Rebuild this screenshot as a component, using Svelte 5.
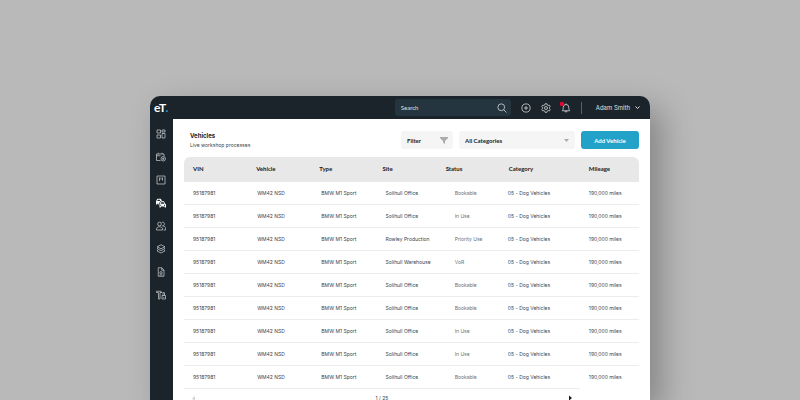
<script>
  const navItems = [
    { id: 'dashboard', label: 'Dashboard' },
    { id: 'bookings', label: 'Bookings' },
    { id: 'board', label: 'Board' },
    { id: 'vehicles', label: 'Vehicles' },
    { id: 'users', label: 'Users' },
    { id: 'stock', label: 'Stock' },
    { id: 'reports', label: 'Reports' },
    { id: 'tools', label: 'Tools' }
  ];

  const columns = [
    { key: 'vin', label: 'VIN' },
    { key: 'vehicle', label: 'Vehicle' },
    { key: 'type', label: 'Type' },
    { key: 'site', label: 'Site' },
    { key: 'status', label: 'Status' },
    { key: 'category', label: 'Category' },
    { key: 'mileage', label: 'Mileage' }
  ];

  const places = [
    ['Solihull Office', 'Bookable'],
    ['Solihull Office', 'In Use'],
    ['Rowley Production', 'Priority Use'],
    ['Solihull Warehouse', 'VoR'],
    ['Solihull Office', 'Bookable'],
    ['Solihull Office', 'Bookable'],
    ['Solihull Office', 'In Use'],
    ['Solihull Office', 'In Use'],
    ['Solihull Office', 'Bookable']
  ];

  const vehicles = places.map(([site, status]) => ({
    vin: '95187981',
    vehicle: 'WM42 NSD',
    type: 'BMW M1 Sport',
    site,
    status,
    category: '05 - Dog Vehicles',
    mileage: '190,000 miles'
  }));

  let active = $state('vehicles');
  let search = $state('');
</script>

<div class="page">
  <div class="window">
    <header class="topbar">
      <a class="logo" href="#home">eT<span>.</span></a>

      <label class="search">
        <input type="text" placeholder="Search" aria-label="Search" bind:value={search} />
        <svg viewBox="0 0 20 20" width="10" height="10">
          <circle cx="8.5" cy="8.5" r="6.8" />
          <path d="M13.5 13.5L19 19" />
        </svg>
      </label>

      <div class="actions">
        <button aria-label="Add">
          <svg viewBox="0 0 20 20" width="10" height="10">
            <circle cx="10" cy="10" r="8.2" />
            <path d="M10 6v8M6 10h8" />
          </svg>
        </button>
        <button aria-label="Settings">
          <svg viewBox="0 0 20 20" width="10" height="10">
            <path d="M8.2 1.5h3.6l.6 2.4 1.9 1.1 2.4-.7 1.8 3.1-1.8 1.7v2l1.8 1.7-1.8 3.1-2.4-.7-1.9 1.1-.6 2.4H8.2l-.6-2.4-1.9-1.1-2.4.7-1.8-3.1 1.8-1.7v-2L1.5 7.4l1.8-3.1 2.4.7 1.9-1.1z" />
            <circle cx="10" cy="10" r="3" />
          </svg>
        </button>
        <button class="bell" aria-label="Notifications">
          <svg viewBox="0 0 20 20" width="10" height="10">
            <path d="M2.5 15.5c1.7-1.5 2-3.5 2-7a5.5 5.5 0 0 1 11 0c0 3.5.3 5.500 2 7zM8 16c0 3 4 3 4 0M10 3V1" />
          </svg>
          <i></i>
        </button>
      </div>

      <button class="user">
        Adam Smith
        <svg viewBox="0 0 10 10" width="5" height="5"><path d="M1 3l4 4 4-4" /></svg>
      </button>
    </header>

    <div class="body">
      <nav class="sidebar">
        {#each navItems as item}
          <a
            href="#{item.id}"
            class:active={active === item.id}
            aria-label={item.label}
            onclick={() => (active = item.id)}
          >
            <svg viewBox="0 0 20 20" width="10" height="10">
              {#if item.id === 'dashboard'}
                <path d="M2 2h7v6H2zM2 12h7v6H2zM12 9h6v9h-6zM12 2h6v4h-6z" />
              {:else if item.id === 'bookings'}
                <path d="M9 17H1V4h15v4M1 7.5h8M4.5 4V1.5M12 4V1.5" />
                <circle cx="14.5" cy="13.5" r="4.5" />
                <path d="M14.5 11v5M12 13.5h5" />
              {:else if item.id === 'board'}
                <path d="M2 2h16v16H2zM7 5v7M10 5v4M13 5v6" />
              {:else if item.id === 'vehicles'}
                <path class="solid" fill-rule="evenodd" d="M0 7l2-4.5L3.500 1.500h6L12 5.500 8.500 6 7 9.500 5.500 11v2H3.500v-1.500H2V13H0zM3.500 3.500L2.500 6h5l1-2.500z" />
                <path class="solid" fill-rule="evenodd" d="M7 12l2-4.500 1.500-1H16l2 4.500 2 2v6h-2.500v-2H9.500v2H7zM10.500 8.500l-1.200 3h7.200l-1.200-3zM8.500 13.500v2h2v-2zM16 13.500v2h2v-2z" />
              {:else if item.id === 'users'}
                <circle cx="7" cy="6" r="3.7" />
                <path d="M1 18v-2c0-6 12-6 12 0v2zM11.5 2.800a3.700 3.700 0 1 1 1.500 6.900c4 0 6 2.500 6 5.300v3h-4" />
              {:else if item.id === 'stock'}
                <path d="M10 1.500l8 4-8 4-8-4zM4 7.500l-2 1.700 8 4 8-4-2-1.700M4 12l-2 1.700 8 4.300 8-4.300-2-1.700" />
              {:else if item.id === 'reports'}
                <path d="M4.500 1.500h7l4.500 5v12H4.500zM11.500 1.500v5H16" />
                <circle cx="10" cy="11.500" r="2.300" />
                <path d="M7 16h6" />
              {:else}
                <path d="M1 2.500h9l2 2.500H8v13H5V5H1zM12 11h7v7h-7zM14 11V6l1.500-2L17 6v5M15.500 14v2" />
              {/if}
            </svg>
          </a>
        {/each}
      </nav>

      <main>
        <div class="toolbar">
          <div class="heading">
            <h1>Vehicles</h1>
            <p>Live workshop processes</p>
          </div>
          <button class="filter">
            Filter
            <svg viewBox="0 0 16 14" width="8" height="7"><path d="M0 0h16v2L10 8v6L6 11V8L0 2z" /></svg>
          </button>
          <div class="select">
            <select aria-label="Category">
              <option>All Categories</option>
            </select>
            <svg viewBox="0 0 10 6" width="5" height="3"><path d="M0 0h10L5 6z" /></svg>
          </div>
          <button class="add">Add Vehicle</button>
        </div>

        <table>
          <thead>
            <tr>
              {#each columns as col}
                <th class={col.key}>{col.label}</th>
              {/each}
            </tr>
          </thead>
          <tbody>
            {#each vehicles as row}
              <tr>
                {#each columns as col}
                  <td class={col.key}>{row[col.key]}</td>
                {/each}
              </tr>
            {/each}
          </tbody>
        </table>

        <div class="pager">
          <button aria-label="Previous page" disabled>
            <svg viewBox="0 0 6 10" width="3" height="5"><path d="M6 0v10L0 5z" /></svg>
          </button>
          <span>1 / 25</span>
          <button aria-label="Next page">
            <svg viewBox="0 0 6 10" width="3" height="6"><path d="M0 0v10l6-5z" /></svg>
          </button>
        </div>
      </main>
    </div>
  </div>
</div>

<style>
  :global(body) {
    background: #b9b9b9;
  }

  .page {
    box-sizing: border-box;
    height: 100vh;
    padding: 96px 150px 0;
    overflow: hidden;
    font-family: Inter, 'Open Sans', sans-serif;
    font-size: 5px;
    color: #3c4347;
    display: flex;
  }

  .window {
    flex: 1;
    min-width: 0;
    display: flex;
    flex-direction: column;
    background: #1a242a;
    border-radius: 10px 10px 0 0;
    box-shadow: 12px 12px 32px rgba(0, 0, 0, 0.28);
  }

  button,
  input,
  select {
    font: inherit;
    color: inherit;
    border: none;
    background: none;
    margin: 0;
    padding: 0;
  }

  button {
    cursor: pointer;
  }

  svg {
    display: block;
    fill: none;
    stroke: currentColor;
    stroke-width: 1.5;
  }

  /* Top bar */
  .topbar {
    display: flex;
    align-items: center;
    height: 23px;
    padding: 0 10px 0 4px;
    color: #dfe3e5;
  }

  .logo {
    flex: 1;
    font-family: Lato, sans-serif;
    font-size: 12px;
    line-height: 16px;
    font-weight: bold;
    color: #ffffff;
    text-decoration: none;
  }

  .logo span {
    color: #22a2c9;
  }

  .search {
    box-sizing: border-box;
    display: flex;
    align-items: center;
    width: 116px;
    height: 17px;
    padding: 0 4px 0 6px;
    border-radius: 3px;
    background: #243540;
    font-family: Lato, sans-serif;
    font-size: 6px;
  }

  .search input {
    flex: 1;
    min-width: 0;
    outline: none;
  }

  .search input::placeholder {
    color: #dfe3e5;
    opacity: 1;
  }

  .actions {
    display: flex;
    align-items: center;
    gap: 10px;
    height: 12px;
    padding: 0 10px;
    border-right: 1px solid #56626a;
  }

  .bell {
    position: relative;
  }

  .bell i {
    position: absolute;
    top: -1px;
    left: -1px;
    width: 4px;
    height: 4px;
    border-radius: 1px;
    background: #e3062c;
  }

  .user {
    display: flex;
    align-items: center;
    gap: 5px;
    padding-left: 14px;
    font-size: 6px;
  }

  .user svg {
    stroke-width: 2;
  }

  /* Layout below the top bar */
  .body {
    flex: 1;
    display: flex;
    min-height: 0;
  }

  .sidebar {
    box-sizing: border-box;
    width: 23px;
    padding: 10px 2px 0 0;
    display: flex;
    flex-direction: column;
    align-items: center;
    gap: 13px;
  }

  .sidebar a {
    color: #c4cacd;
  }

  .sidebar a.active {
    color: #ffffff;
  }

  .solid {
    fill: currentColor;
    stroke: none;
  }

  main {
    flex: 1;
    min-width: 0;
    padding: 12px 11px 0;
    background: #ffffff;
  }

  .toolbar {
    display: flex;
    align-items: center;
    gap: 6px;
    margin-bottom: 8px;
  }

  .heading {
    flex: 1;
    padding-left: 6px;
  }

  h1 {
    margin: 0 0 2px;
    font-size: 6px;
    line-height: 8px;
    font-weight: 700;
    color: #1a242a;
  }

  p {
    margin: 0;
    line-height: 7px;
  }

  .filter,
  .select,
  .add {
    box-sizing: border-box;
    height: 18px;
    border-radius: 3px;
    font-family: Lato, sans-serif;
    font-size: 6px;
    font-weight: 700;
    color: #1a242a;
    background: #f5f5f5;
  }

  .filter {
    display: flex;
    align-items: center;
    justify-content: space-between;
    width: 52px;
    padding: 0 5px 0 6px;
  }

  .filter svg,
  .select svg {
    fill: #ababab;
    stroke: none;
  }

  .select {
    display: grid;
    align-items: center;
    width: 116px;
  }

  .select select,
  .select svg {
    grid-area: 1 / 1;
  }

  .select select {
    appearance: none;
    height: 18px;
    padding: 0 6px;
    outline: none;
  }

  .select svg {
    justify-self: end;
    margin-right: 6px;
    pointer-events: none;
  }

  .add {
    width: 58px;
    color: #ffffff;
    background: #22a2c9;
  }

  /* Vehicle table */
  table {
    width: 100%;
    table-layout: fixed;
    border-collapse: separate;
    border-spacing: 0;
  }

  th,
  td {
    box-sizing: border-box;
    height: 23px;
    padding: 0 0 0 9px;
    text-align: left;
    white-space: nowrap;
  }

  th {
    height: 25px;
    padding-bottom: 2px;
    font-family: Lato, sans-serif;
    font-size: 6px;
    font-weight: 700;
    color: #1a1a1a;
    background: #e8e8e8;
  }

  th.category {
    width: 80px;
  }

  th.mileage {
    width: 13%;
  }

  th:first-child {
    border-top-left-radius: 6px;
  }

  th:last-child {
    border-top-right-radius: 6px;
  }

  td {
    border-bottom: 1px solid #ececec;
  }

  td.vehicle {
    padding-left: 10px;
  }

  td.type {
    padding-left: 11px;
  }

  td.site {
    padding-left: 12px;
  }

  td.status {
    padding-left: 18px;
    color: #66707a;
  }

  td.category {
    padding-left: 8px;
  }

  tbody tr:last-child td:last-child {
    border-bottom-color: transparent;
  }

  .pager {
    box-sizing: border-box;
    display: flex;
    align-items: center;
    justify-content: space-between;
    width: 87%;
    height: 18px;
    padding: 0 8px;
  }

  .pager svg {
    fill: #1a1a1a;
    stroke: none;
  }

  .pager button:disabled svg {
    fill: #d5d5d5;
  }
</style>
